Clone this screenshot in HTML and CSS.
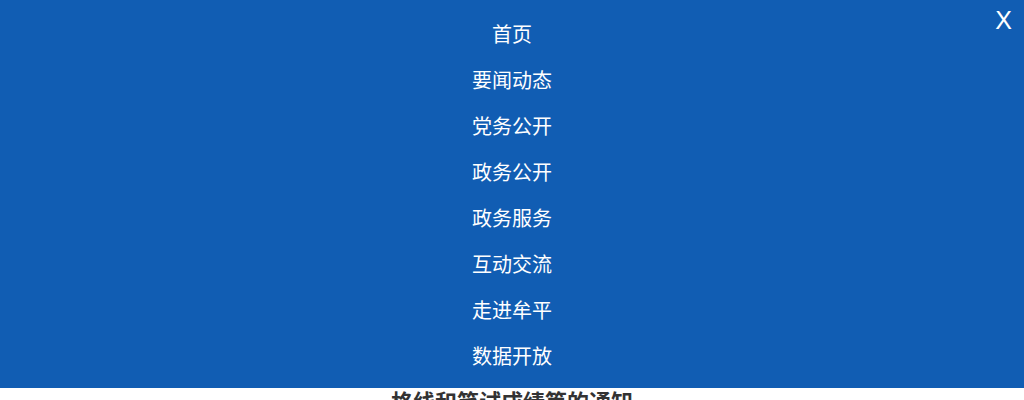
FILE: index.html
```html
<!DOCTYPE html>
<html lang="zh-CN">
<head>
<meta charset="utf-8">
<title>菜单</title>
<link rel="stylesheet" href="styles.css">
</head>
<body>
<nav class="menu">
  <span class="close">X</span>
  <ul class="menu-list">
    <li><a href="#">首页</a></li>
    <li><a href="#">要闻动态</a></li>
    <li><a href="#">党务公开</a></li>
    <li><a href="#">政务公开</a></li>
    <li><a href="#">政务服务</a></li>
    <li><a href="#">互动交流</a></li>
    <li><a href="#">走进牟平</a></li>
    <li><a href="#">数据开放</a></li>
  </ul>
</nav>
<h1 class="title">格线和笔试成绩等的通知</h1>
</body>
</html>
```
FILE: styles.css
```css
html, body {
  margin: 0;
  padding: 0;
  background: #ffffff;
  overflow: hidden;
  font-family: "Liberation Sans", "Noto Sans CJK SC", sans-serif;
}
.menu {
  position: relative;
  background: #115db3;
  padding: 11px 0 9px;
}
.close {
  position: absolute;
  top: 5px;
  right: 12px;
  color: #ffffff;
  font-size: 25px;
  line-height: 30px;
}
.menu-list {
  list-style: none;
  margin: 0;
  padding: 0;
}
.menu-list li {
  height: 46px;
  line-height: 46px;
  text-align: center;
  font-size: 20px;
}
.menu-list a {
  color: #ffffff;
  text-decoration: none;
  font-family: "Noto Sans CJK SC", sans-serif;
}
.title {
  margin: 0;
  text-align: center;
  font-size: 22px;
  line-height: 24px;
  font-weight: bold;
  color: #333333;
  font-family: "Noto Sans CJK SC", sans-serif;
}
```
